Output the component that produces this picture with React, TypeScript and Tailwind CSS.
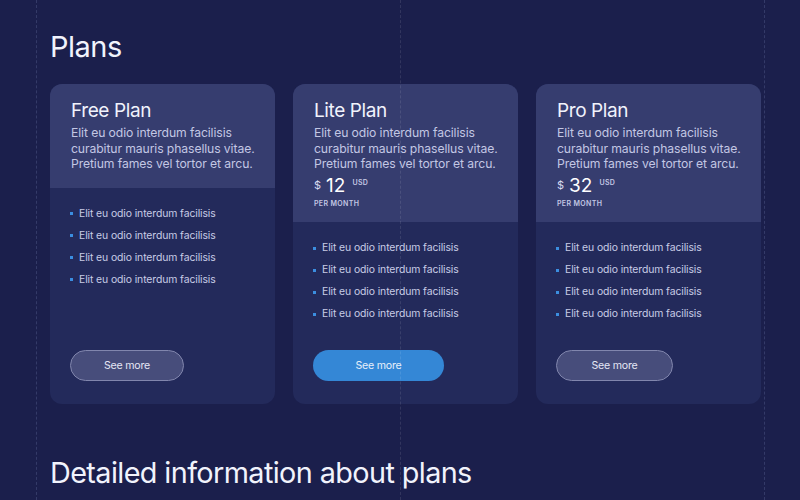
const plans = [
  { name: 'Free Plan', price: null as string | null, primary: false, btnW: 'w-[114px]' },
  { name: 'Lite Plan', price: '12', primary: true, btnW: 'w-[131px]' },
  { name: 'Pro Plan', price: '32', primary: false, btnW: 'w-[117px]' },
];

const features = [
  'Elit eu odio interdum facilisis',
  'Elit eu odio interdum facilisis',
  'Elit eu odio interdum facilisis',
  'Elit eu odio interdum facilisis',
];

function PlanCard({ plan }: { plan: (typeof plans)[number] }) {
  return (
    <div className="flex flex-col rounded-xl overflow-hidden bg-[#232a5b] h-[320px]">
      {/* Header */}
      <div className={`bg-[#363d6f] px-[21px] pt-[15px] ${plan.price ? 'pb-[13px]' : 'pb-[16px]'}`}>
        <div className="text-[19px] leading-6 tracking-[-0.4px] text-[#f1f3fc]">{plan.name}</div>
        <p className="mt-[2px] whitespace-nowrap text-[12.2px] leading-[15.5px] tracking-[-0.1px] text-[#c3c7e4]">
          Elit eu odio interdum facilisis
          <br />
          curabitur mauris phasellus vitae.
          <br />
          Pretium fames vel tortor et arcu.
        </p>
        {plan.price && (
          <div className="mt-[3px]">
            <div className="flex items-center gap-[5px] h-[22px]">
              <span className="text-[11px] text-[#d9dcf0]">$</span>
              <span className="text-[19px] leading-none text-white">{plan.price}</span>
              <span className="text-[7px] font-semibold tracking-wider text-[#c3c7e4] -mt-1 ml-[2px]">USD</span>
            </div>
            <div className="text-[7px] font-semibold tracking-wider text-[#c3c7e4] mt-[2px]">PER MONTH</div>
          </div>
        )}
      </div>

      {/* Body */}
      <div className="flex-1 flex flex-col px-[20px] pt-[15px] pb-[23px]">
        <ul>
          {features.map((f, i) => (
            <li key={i} className="flex items-center gap-[6px] h-[22px] whitespace-nowrap text-[10.4px] tracking-[-0.1px] text-[#c8cce6]">
              <span className="w-[3px] h-[3px] bg-[#3b8ee0] shrink-0" />
              {f}
            </li>
          ))}
        </ul>
        <button
          className={`mt-auto ${plan.btnW} h-[31px] rounded-full text-[10.6px] tracking-[-0.2px] ${
            plan.primary
              ? 'bg-[#3487d6] text-[#e6effa]'
              : 'bg-[#474d7b] border border-[#8186ad] text-[#e4e6f4]'
          }`}
        >
          See more
        </button>
      </div>
    </div>
  );
}

export default function App() {
  return (
    <div
      className="relative w-[800px] h-[500px] overflow-hidden bg-[#1b1f4c]"
      style={{ fontFamily: 'Inter, "Noto Sans", sans-serif' }}
    >
      {/* Guide lines */}
      <div className="pointer-events-none absolute inset-0 z-10">
        <div className="absolute top-0 bottom-0 left-[36px] border-l border-dashed border-[#343a68]" />
        <div className="absolute top-0 bottom-0 left-[400px] border-l border-dashed border-[#ffffff]/10" />
        <div className="absolute top-0 bottom-0 left-[764px] border-l border-dashed border-[#343a68]" />
      </div>

      <div className="px-[50px] pt-[28px]">
        <h1 className="text-[29px] leading-[38px] tracking-[-0.5px] text-[#f1f3fc]">Plans</h1>

        <div className="mt-[18px] grid grid-cols-3 gap-[18px] w-[711px]">
          {plans.map(p => (
            <PlanCard key={p.name} plan={p} />
          ))}
        </div>

        <h2 className="mt-[50px] text-[28.8px] leading-[38px] tracking-[-0.6px] text-[#f1f3fc]">
          Detailed information about plans
        </h2>
      </div>
    </div>
  );
}
